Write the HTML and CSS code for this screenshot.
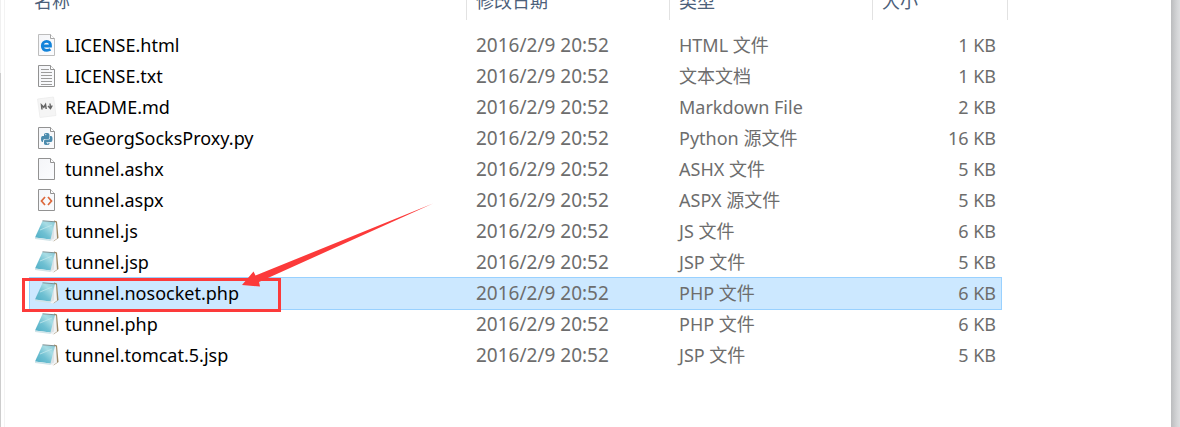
FILE: index.html
```html
<!DOCTYPE html>
<html lang="zh-CN">
<head>
  <meta charset="UTF-8" />
  <meta name="viewport" content="width=device-width, initial-scale=1.0" />
  <title>reGeorg</title>
  <link rel="stylesheet" href="styles.css">
</head>
<body>
  <!-- shared icon shapes -->
  <svg class="defs" aria-hidden="true">
    <defs>
      <linearGradient id="paper" x1="0" y1="0" x2="1" y2="1">
        <stop offset="0" stop-color="#f4f5f8" />
        <stop offset="1" stop-color="#fbfcfe" />
      </linearGradient>
      <linearGradient id="cover" x1="0" y1="1" x2="1" y2="0">
        <stop offset="0" stop-color="#4dadc5" />
        <stop offset="0.4" stop-color="#6fc0d2" />
        <stop offset="0.7" stop-color="#a8dde5" />
        <stop offset="1" stop-color="#86c6d4" />
      </linearGradient>
      <symbol id="page" viewBox="0 0 24 24">
        <path d="M3.5 1.5h12l4 4v17h-16z" fill="url(#paper)" stroke="#929292" />
        <path d="M15.5 1.5v4h4" fill="#fff" stroke="#929292" />
      </symbol>
      <symbol id="notepad" viewBox="0 0 24 24">
        <path d="M19 1.500 22 2.500l1.500 16.500-5 3.500z" fill="#9b8560" />
        <path d="M18.500 2.500 21 3.500l1 16-4 3-4-1z" fill="#f1f3f4" />
        <path d="M19 7 15 21.500l4-2z" fill="#dde3e6" />
        <path d="M7.500 2 20 3 15.500 20.500 0 18.500z" fill="url(#cover)" />
        <path d="M7.500 1.800 20 2.800" stroke="#7c8f92" stroke-width="1" />
        <path d="M0 18.500 15.500 20.500v1.500L0 20z" fill="#d0e4e9" />
        <path d="M5 11 17 6" stroke="#c2e8ed" stroke-width=".8" />
      </symbol>
    </defs>
  </svg>

  <div class="window">
    <div class="nav-edge"></div>
    <main class="files">
      <table class="file-list">
        <colgroup>
          <col class="col-name">
          <col class="col-date">
          <col class="col-type">
          <col class="col-size">
          <col class="col-end">
        </colgroup>
        <thead>
          <tr>
            <th scope="col">名称</th>
            <th scope="col">修改日期</th>
            <th scope="col">类型</th>
            <th scope="col" colspan="2">大小</th>
          </tr>
        </thead>
        <tbody>
          <tr>
            <td><div class="name">
              <svg class="icon" viewBox="0 0 24 24">
                <path d="M3.5 1.5h12l4 4v17h-16z" fill="url(#paper)" stroke="#bdbdbd" />
                <path d="M15.5 1.5v4h4" fill="#fff" stroke="#a5a5a5" />
                <path d="M8 13h7.500c.2-3.200-1.500-4.700-3.800-4.700-2.700 0-4.400 2-4.400 4.400 0 3 2 4.600 4.700 4.600 1.600 0 2.700-.4 3.500-.9" fill="none" stroke="#1283da" stroke-width="2.800" />
              </svg>
              <span>LICENSE.html</span>
            </div></td>
            <td class="date">2016/2/9 20:52</td><td>HTML 文件</td><td class="size">1 KB</td>
          </tr>
          <tr>
            <td><div class="name">
              <svg class="icon" viewBox="0 0 24 24">
                <use href="#page" />
                <path d="M6 5.500h8M6 8.500h11M6 11.500h11M6 14.500h11M6 17.500h11M6 20.500h11" stroke="#9c9c9c" />
              </svg>
              <span>LICENSE.txt</span>
            </div></td>
            <td class="date">2016/2/9 20:52</td><td>文本文档</td><td class="size">1 KB</td>
          </tr>
          <tr>
            <td><div class="name">
              <svg class="icon" viewBox="0 0 24 24">
                <path d="M2.500 4 18.500 2 21 20.500 5 22.500z" fill="#f5f5f5" stroke="#ececec" stroke-width=".8" />
                <path d="M7 14.500 6.500 10l2.300 2.200L10.500 9.500l.7 4.500" fill="none" stroke="#666" stroke-width="1.500" />
                <path d="M15 8.500 15.500 13M13 11l2.500 2.500 1.700-3" fill="none" stroke="#666" stroke-width="1.400" />
              </svg>
              <span>README.md</span>
            </div></td>
            <td class="date">2016/2/9 20:52</td><td>Markdown File</td><td class="size">2 KB</td>
          </tr>
          <tr>
            <td><div class="name">
              <svg class="icon" viewBox="0 0 24 24">
                <use href="#page" />
                <path d="M9 10V8.500Q9 7 11 7h1.500Q14.500 7 14.500 9v2.500q0 1.500-1.500 1.500h-3q-2 0-2 2v1H7.500Q6 16 6 13t1.500-3H12" fill="#4b8bad" />
                <path d="M15 10h1q1.500 0 1.500 3T16 16h-4.500v.7h3v1q0 1.300-2.300 1.300h-1Q9 19 9 17.500V15q0-1.500 1.500-1.500h3Q15 13.500 15 12z" fill="#4b8bad" />
                <circle cx="10.800" cy="8.600" r=".6" fill="#fff" />
                <circle cx="12.800" cy="17.600" r=".6" fill="#fff" />
              </svg>
              <span>reGeorgSocksProxy.py</span>
            </div></td>
            <td class="date">2016/2/9 20:52</td><td>Python 源文件</td><td class="size">16 KB</td>
          </tr>
          <tr>
            <td><div class="name">
              <svg class="icon" viewBox="0 0 24 24"><use href="#page" /></svg>
              <span>tunnel.ashx</span>
            </div></td>
            <td class="date">2016/2/9 20:52</td><td>ASHX 文件</td><td class="size">5 KB</td>
          </tr>
          <tr>
            <td><div class="name">
              <svg class="icon" viewBox="0 0 24 24">
                <use href="#page" />
                <path d="M10 9 6.500 13l3.500 4M13 9l3.500 4-3.500 4" fill="none" stroke="#dc673a" stroke-width="1.700" />
              </svg>
              <span>tunnel.aspx</span>
            </div></td>
            <td class="date">2016/2/9 20:52</td><td>ASPX 源文件</td><td class="size">5 KB</td>
          </tr>
          <tr>
            <td><div class="name">
              <svg class="icon" viewBox="0 0 24 24"><use href="#notepad" /></svg>
              <span>tunnel.js</span>
            </div></td>
            <td class="date">2016/2/9 20:52</td><td>JS 文件</td><td class="size">6 KB</td>
          </tr>
          <tr>
            <td><div class="name">
              <svg class="icon" viewBox="0 0 24 24"><use href="#notepad" /></svg>
              <span>tunnel.jsp</span>
            </div></td>
            <td class="date">2016/2/9 20:52</td><td>JSP 文件</td><td class="size">5 KB</td>
          </tr>
          <tr class="selected">
            <td><div class="name">
              <svg class="icon" viewBox="0 0 24 24"><use href="#notepad" /></svg>
              <span>tunnel.nosocket.php</span>
              <svg class="callout" viewBox="0 0 412 110" aria-hidden="true">
                <rect x="1.500" y="76.500" width="256" height="31" fill="none" stroke="#fc3a3a" stroke-width="3" />
                <path d="M220 82 231.500 68.500l2 4L411 .5 237 79l1 4.500z" fill="#fc3a3a" />
              </svg>
            </div></td>
            <td class="date">2016/2/9 20:52</td><td>PHP 文件</td><td class="size">6 KB</td>
          </tr>
          <tr>
            <td><div class="name">
              <svg class="icon" viewBox="0 0 24 24"><use href="#notepad" /></svg>
              <span>tunnel.php</span>
            </div></td>
            <td class="date">2016/2/9 20:52</td><td>PHP 文件</td><td class="size">6 KB</td>
          </tr>
          <tr>
            <td><div class="name">
              <svg class="icon" viewBox="0 0 24 24"><use href="#notepad" /></svg>
              <span>tunnel.tomcat.5.jsp</span>
            </div></td>
            <td class="date">2016/2/9 20:52</td><td>JSP 文件</td><td class="size">5 KB</td>
          </tr>
        </tbody>
      </table>
    </main>
    <div class="window-shadow"></div>
  </div>
</body>
</html>
```

FILE: styles.css
```css
body {
  margin: 0;
  font-family: 'Noto Sans', 'Noto Sans CJK SC', sans-serif;
  font-size: 18px;
  color: #6d6d6d;
  background: #fff;
}
.defs {
  display: block;
  width: 0;
  height: 0;
}
.window {
  display: flex;
  min-height: 100vh;
  overflow: hidden;
}
.nav-edge {
  width: 4px;
  border-right: 1px solid #f3f3f3;
  background: linear-gradient(#f0f0f0 73px, #cdcdcd 73px) no-repeat 0 0 / 1px 100%;
}
.files {
  flex: 1;
  padding: 0 163px 0 24px;
}
.window-shadow {
  width: 9px;
  background: linear-gradient(to right, #bbbcbe, #d5d6d8 70%, #dcdddf);
}

/* list is scrolled so only the lower half of the header shows */
.file-list {
  width: 100%;
  margin-top: -20px;
  table-layout: fixed;
  border-collapse: separate;
  border-spacing: 0;
}
.col-date,
.col-type {
  width: 203px;
}
.col-size {
  width: 129px;
}
.col-end {
  width: 6px;
}
th {
  height: 40px;
  padding: 0 0 0 9px;
  box-sizing: border-box;
  border-right: 1px solid #e2e2e2;
  font-weight: normal;
  text-align: left;
  color: #4c607a;
}
th:first-child {
  padding-left: 5px;
}
thead::after {
  content: '';
  display: block;
  height: 10px;
}
td {
  height: 31px;
  padding: 0 0 2px 9px;
  box-sizing: border-box;
  line-height: 28px;
  white-space: nowrap;
}
td:first-child {
  padding-left: 6px;
}
td.date {
  font-size: 19px;
}
td.size {
  padding: 0 6px 2px 0;
  text-align: right;
}
.name {
  position: relative;
  display: flex;
  align-items: center;
  gap: 6px;
  color: #000;
}
.icon {
  width: 24px;
  height: 24px;
}
.selected td {
  background: #cce8ff;
  box-shadow: 0 -1px #99d1ff, 0 1px #99d1ff;
}
.selected td:first-child {
  box-shadow: 0 -1px #99d1ff, 0 1px #99d1ff, inset 1px 0 #99d1ff;
}
.selected td.size {
  box-shadow: 0 -1px #99d1ff, 0 1px #99d1ff, inset -1px 0 #99d1ff;
}
.callout {
  position: absolute;
  left: -13px;
  top: -76px;
  width: 412px;
  height: 110px;
  z-index: 1;
}
```
